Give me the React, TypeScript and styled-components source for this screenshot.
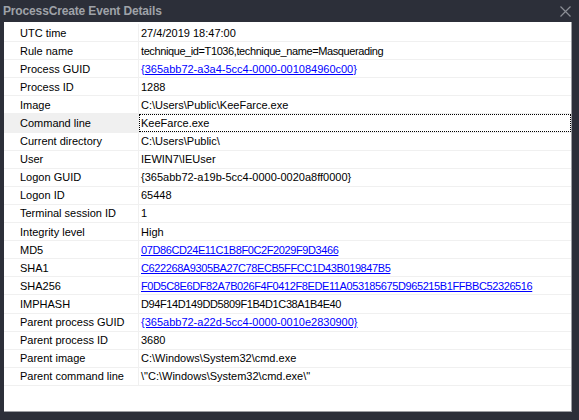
import React from "react";
import styled, { createGlobalStyle } from "styled-components";

const Global = createGlobalStyle`
  html, body { margin: 0; padding: 0; background: #2c2f39; }
  body { width: 579px; height: 420px; overflow: hidden; }
`;

const Window = styled.div`
  width: 579px;
  height: 420px;
  background: #2c2f39;
  display: flex;
  flex-direction: column;
  box-sizing: border-box;
  font-family: "Liberation Sans", Arial, sans-serif;
`;

const TitleBar = styled.div`
  height: 22px;
  display: flex;
  align-items: center;
  justify-content: space-between;
  padding: 0 8px 0 3px;
`;

const Title = styled.span`
  font-family: "Liberation Sans", Arial, sans-serif;
  font-weight: bold;
  font-size: 12px;
  color: #9fa2a8;
  letter-spacing: -0.15px;
`;

const Close = styled.svg`
  width: 11px;
  height: 11px;
  margin-top: 1px;
`;

const Body = styled.div`
  flex: 1;
  display: flex;
  padding: 0 7px 8px 4px;
`;

const Panel = styled.div`
  flex: 1;
  background: #fff;
  border-right: 1px solid #9c9ea3;
  border-bottom: 1px solid #9c9ea3;
  padding-top: 2px;
`;

const Row = styled.div`
  display: grid;
  grid-template-columns: 135px 1fr;
  height: 18.1px;
  border-bottom: 1px solid #f0f0f0;
  box-sizing: border-box;
  font-size: 11px;
  color: #000;
`;

const Label = styled.div<{ $selected?: boolean }>`
  padding-left: 16px;
  display: flex;
  align-items: center;
  background: ${(p) => (p.$selected ? "#f0f0f0" : "transparent")};
  border-right: 1px solid #f0f0f0;
`;

const Value = styled.div<{ $focused?: boolean; $tight?: boolean }>`
  padding-left: 2px;
  display: flex;
  align-items: center;
  white-space: nowrap;
  overflow: hidden;
  letter-spacing: ${(p) => (p.$tight ? "-0.4px" : "0")};
  ${(p) => (p.$focused ? "outline: 1px dotted #000; outline-offset: -1px;" : "")}
`;

const Link = styled.a`
  color: #0000ff;
  text-decoration: underline;
  cursor: pointer;
`;

type Item = { label: string; value: string; link?: boolean; tight?: boolean };

const items: Item[] = [
  { label: "UTC time", value: "27/4/2019 18:47:00" },
  { label: "Rule name", value: "technique_id=T1036,technique_name=Masquerading", tight: true },
  { label: "Process GUID", value: "{365abb72-a3a4-5cc4-0000-001084960c00}", link: true },
  { label: "Process ID", value: "1288" },
  { label: "Image", value: "C:\\Users\\Public\\KeeFarce.exe" },
  { label: "Command line", value: "KeeFarce.exe" },
  { label: "Current directory", value: "C:\\Users\\Public\\" },
  { label: "User", value: "IEWIN7\\IEUser" },
  { label: "Logon GUID", value: "{365abb72-a19b-5cc4-0000-0020a8ff0000}" },
  { label: "Logon ID", value: "65448" },
  { label: "Terminal session ID", value: "1" },
  { label: "Integrity level", value: "High" },
  { label: "MD5", value: "07D86CD24E11C1B8F0C2F2029F9D3466", link: true, tight: true },
  { label: "SHA1", value: "C622268A9305BA27C78ECB5FFCC1D43B019847B5", link: true, tight: true },
  { label: "SHA256", value: "F0D5C8E6DF82A7B026F4F0412F8EDE11A053185675D965215B1FFBBC52326516", link: true, tight: true },
  { label: "IMPHASH", value: "D94F14D149DD5809F1B4D1C38A1B4E40", tight: true },
  { label: "Parent process GUID", value: "{365abb72-a22d-5cc4-0000-0010e2830900}", link: true },
  { label: "Parent process ID", value: "3680" },
  { label: "Parent image", value: "C:\\Windows\\System32\\cmd.exe" },
  { label: "Parent command line", value: "\\\"C:\\Windows\\System32\\cmd.exe\\\"" },
];

export default function App() {
  return (
    <>
      <Global />
      <Window>
        <TitleBar>
          <Title>ProcessCreate Event Details</Title>
          <Close viewBox="0 0 11 11">
            <path d="M0.5 0.5 L10.5 10.5 M10.5 0.5 L0.5 10.5" stroke="#8b8e95" strokeWidth="1.2" />
          </Close>
        </TitleBar>
        <Body>
          <Panel>
            {items.map((it) => {
              const sel = it.label === "Command line";
              return (
                <Row key={it.label}>
                  <Label $selected={sel}>{it.label}</Label>
                  <Value $focused={sel} $tight={it.tight}>
                    {it.link ? <Link>{it.value}</Link> : it.value}
                  </Value>
                </Row>
              );
            })}
          </Panel>
        </Body>
      </Window>
    </>
  );
}
